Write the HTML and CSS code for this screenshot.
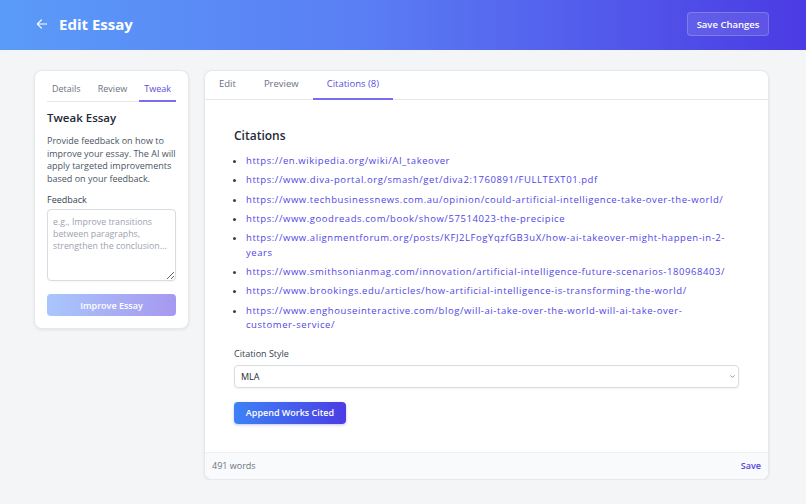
FILE: index.html
```html
<!DOCTYPE html>
<html lang="en">
<head>
    <meta charset="UTF-8">
    <meta name="viewport" content="width=device-width, initial-scale=1.0">
    <title>Edit Essay</title>
    <link rel="stylesheet" href="styles.css">
</head>
<body>
    <header class="topbar">
        <div class="topbar-left">
            <svg class="back" width="14" height="14" viewBox="0 0 24 24" fill="none" stroke="currentColor" stroke-width="2" stroke-linecap="round" stroke-linejoin="round"><path d="M20 12H4M11 19l-7-7 7-7"/></svg>
            <h1>Edit Essay</h1>
        </div>
        <button class="save-changes">Save Changes</button>
    </header>

    <main class="layout">
        <aside class="card side">
            <nav class="side-tabs">
                <span class="side-tab">Details</span>
                <span class="side-tab">Review</span>
                <span class="side-tab active">Tweak</span>
            </nav>
            <h2>Tweak Essay</h2>
            <p class="hint">Provide feedback on how to improve your essay. The AI will apply targeted improvements based on your feedback.</p>
            <label class="label" for="feedback">Feedback</label>
            <textarea id="feedback" placeholder="e.g., Improve transitions between paragraphs, strengthen the conclusion..."></textarea>
            <button class="improve" disabled>Improve Essay</button>
        </aside>

        <section class="card editor">
            <nav class="tabs">
                <span class="tab">Edit</span>
                <span class="tab">Preview</span>
                <span class="tab active">Citations (8)</span>
            </nav>
            <div class="content">
                <h3>Citations</h3>
                <ul class="citations">
                    <li><a href="#">https://en.wikipedia.org/wiki/AI_takeover</a></li>
                    <li><a href="#">https://www.diva-portal.org/smash/get/diva2:1760891/FULLTEXT01.pdf</a></li>
                    <li><a href="#">https://www.techbusinessnews.com.au/opinion/could-artificial-intelligence-take-over-the-world/</a></li>
                    <li><a href="#">https://www.goodreads.com/book/show/57514023-the-precipice</a></li>
                    <li><a href="#">https://www.alignmentforum.org/posts/KFJ2LFogYqzfGB3uX/how-ai-takeover-might-happen-in-2-years</a></li>
                    <li><a href="#">https://www.smithsonianmag.com/innovation/artificial-intelligence-future-scenarios-180968403/</a></li>
                    <li><a href="#">https://www.brookings.edu/articles/how-artificial-intelligence-is-transforming-the-world/</a></li>
                    <li><a href="#">https://www.enghouseinteractive.com/blog/will-ai-take-over-the-world-will-ai-take-over-customer-service/</a></li>
                </ul>
                <label class="label style-label" for="style">Citation Style</label>
                <div class="select-wrap">
                    <select id="style">
                        <option>MLA</option>
                        <option>APA</option>
                        <option>Chicago</option>
                    </select>
                    <svg class="chevron" width="7" height="7" viewBox="0 0 24 24" fill="none" stroke="#6b7280" stroke-width="2.5" stroke-linecap="round" stroke-linejoin="round"><path d="M6 9l6 6 6-6"/></svg>
                </div>
                <button class="append">Append Works Cited</button>
            </div>
            <footer class="editor-footer">
                <span>491 words</span>
                <a href="#" class="save">Save</a>
            </footer>
        </section>
    </main>
</body>
</html>
```

FILE: styles.css
```css
* {
    box-sizing: border-box;
}
body {
    margin: 0;
    font-family: 'Open Sans', 'Noto Sans', sans-serif;
    background-color: #f4f5f7;
    color: #1f2937;
    font-size: 9px;
}
.topbar {
    height: 50px;
    background: linear-gradient(90deg, #5a9bf8 0%, #5a7ef4 45%, #4b3be3 100%);
    display: flex;
    align-items: center;
    justify-content: space-between;
    padding: 0 37px 0 35px;
    color: white;
}
.topbar-left {
    display: flex;
    align-items: center;
    margin-top: -2px;
}
.back {
    margin-right: 10px;
}
.topbar h1 {
    margin: 0;
    font-size: 15px;
    font-weight: 700;
}
.save-changes {
    font-family: inherit;
    font-size: 9.5px;
    font-weight: 600;
    color: white;
    background-color: rgba(255, 255, 255, 0.1);
    border: 1px solid rgba(255, 255, 255, 0.2);
    border-radius: 4px;
    width: 82px;
    height: 24px;
    padding: 0;
    margin-top: -2px;
}
.layout {
    display: flex;
    align-items: flex-start;
    gap: 15px;
    padding: 20px 37px 0 34px;
}
.card {
    background-color: white;
    border: 1px solid #e7e8ec;
    border-radius: 8px;
    box-shadow: 0 1px 3px rgba(0, 0, 0, 0.08);
}
.side {
    width: 155px;
    padding: 7px 12px 12px;
}
.side-tabs {
    display: flex;
    justify-content: space-between;
    border-bottom: 1px solid #e5e7eb;
}
.side-tab {
    padding: 4px 5px 5px;
    line-height: 13px;
    color: #6b7280;
    font-weight: 500;
    border-bottom: 2px solid transparent;
    margin-bottom: -1px;
}
.side-tab.active {
    color: #5b4de0;
    border-bottom-color: #7a6cf0;
}
.side h2 {
    margin: 8px 0 0;
    font-size: 11.5px;
    line-height: 16px;
    font-weight: 600;
    color: #1f2937;
}
.hint {
    margin: 9px 0 0;
    line-height: 12.5px;
    color: #4b5563;
}
.label {
    display: block;
    font-weight: 500;
    color: #374151;
    line-height: 12px;
}
.side .label {
    margin-top: 9px;
}
textarea {
    display: block;
    width: 100%;
    height: 72px;
    margin-top: 3px;
    padding: 6px 5px;
    font-family: inherit;
    font-size: 8.8px;
    line-height: 12px;
    border: 1px solid #d8dbe0;
    border-radius: 4px;
    resize: vertical;
    box-shadow: 0 1px 2px rgba(0, 0, 0, 0.04);
}
textarea::placeholder {
    color: #9ca3af;
}
.improve {
    display: block;
    width: 100%;
    height: 22px;
    margin-top: 13px;
    border: none;
    border-radius: 4px;
    background: linear-gradient(90deg, #a9c6fc, #a698f0);
    color: white;
    font-family: inherit;
    font-size: 9px;
    font-weight: 600;
}
.editor {
    flex: 1;
    overflow: hidden;
}
.tabs {
    display: flex;
    border-bottom: 1px solid #e5e7eb;
}
.tab {
    padding: 6px 14px 7px;
    line-height: 14px;
    font-size: 9.5px;
    font-weight: 500;
    color: #6b7280;
    border-bottom: 2px solid transparent;
    margin-bottom: -1px;
}
.tab.active {
    color: #5b4de0;
    border-bottom-color: #7a6cf0;
}
.content {
    padding: 28px 29px 28px;
}
.content h3 {
    margin: 0;
    font-size: 12px;
    line-height: 16px;
    font-weight: 600;
    color: #1f2937;
}
.citations {
    margin: 10px 0 0;
    padding: 0 9px 0 12px;
    list-style: disc;
}
.citations li {
    line-height: 14.5px;
    margin-bottom: 4.8px;
    font-size: 9.5px;
    color: #374151;
}
.citations li:last-child {
    margin-bottom: 0;
}
.citations a {
    color: #5046e5;
    text-decoration: none;
    letter-spacing: 0.57px;
}
.style-label {
    margin-top: 15px;
}
.select-wrap {
    position: relative;
    margin-top: 5px;
}
select {
    display: block;
    width: 100%;
    height: 23px;
    padding: 0 6px;
    font-family: inherit;
    font-size: 9px;
    color: #1f2937;
    background-color: white;
    border: 1px solid #d8dbe0;
    border-radius: 4px;
    box-shadow: 0 1px 2px rgba(0, 0, 0, 0.05);
    appearance: none;
}
.chevron {
    position: absolute;
    right: 3px;
    top: 8px;
}
.append {
    margin-top: 14px;
    width: 112px;
    height: 22px;
    border: none;
    border-radius: 4px;
    background: linear-gradient(90deg, #3d82f6, #4b3de4);
    color: white;
    font-family: inherit;
    font-size: 9px;
    font-weight: 600;
    box-shadow: 0 1px 3px rgba(60, 60, 200, 0.3);
}
.editor-footer {
    display: flex;
    justify-content: space-between;
    align-items: center;
    height: 27px;
    padding: 0 7px;
    background-color: #f9fafb;
    border-top: 1px solid #eef0f2;
    color: #6b7280;
}
.save {
    color: #5046e5;
    font-weight: 600;
    text-decoration: none;
}
```
